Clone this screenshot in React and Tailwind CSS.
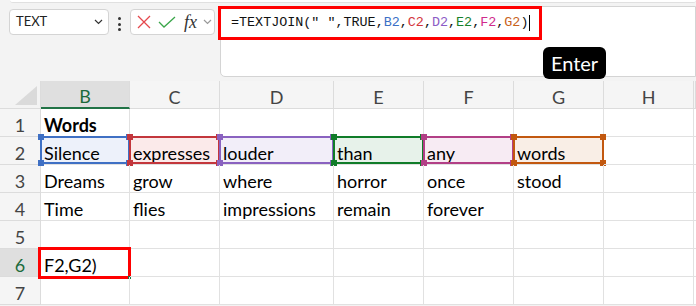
import React from 'react';

const cols = ['B', 'C', 'D', 'E', 'F', 'G', 'H', ''];

const rows = [
  ['Words', '', '', '', '', '', '', ''],
  ['Silence', 'expresses', 'louder', 'than', 'any', 'words', '', ''],
  ['Dreams', 'grow', 'where', 'horror', 'once', 'stood', '', ''],
  ['Time', 'flies', 'impressions', 'remain', 'forever', '', '', ''],
  ['', '', '', '', '', '', '', ''],
  ['F2,G2)', '', '', '', '', '', '', ''],
  ['', '', '', '', '', '', '', ''],
];

// colour of each reference range in row 2
const ranges = [
  { border: 'border-[#3f70c4]', handle: 'bg-[#3f70c4]', fill: 'bg-[#edf1fa]' },
  { border: 'border-[#c3363c]', handle: 'bg-[#c3363c]', fill: 'bg-[#fbeaea]' },
  { border: 'border-[#8a62c0]', handle: 'bg-[#8a62c0]', fill: 'bg-[#f2eef9]' },
  { border: 'border-[#107c29]', handle: 'bg-[#107c29]', fill: 'bg-[#e7f2ea]' },
  { border: 'border-[#b23f86]', handle: 'bg-[#b23f86]', fill: 'bg-[#f7ebf3]' },
  { border: 'border-[#c2580f]', handle: 'bg-[#c2580f]', fill: 'bg-[#f9eee6]' },
];

const gridCols = 'grid grid-cols-[41px_89px_90px_114px_90px_90px_90px_90px_2px]';

function Chevron({ className }) {
  return (
    <svg width="9" height="6" viewBox="0 0 9 6" className={className}>
      <path d="M1 1 L4.5 4.5 L8 1" fill="none" stroke="currentColor" strokeWidth="1.2" />
    </svg>
  );
}

function RangeBox({ r }) {
  return (
    <div className={`absolute -left-[1px] -top-[1px] -right-[1px] bottom-0 border-2 ${r.border}`}>
      <span className={`absolute -left-[4px] -top-[4px] w-[6px] h-[6px] ${r.handle}`} />
      <span className={`absolute -right-[4px] -top-[4px] w-[6px] h-[6px] ${r.handle}`} />
      <span className={`absolute -left-[4px] -bottom-[4px] w-[6px] h-[6px] ${r.handle}`} />
      <span className={`absolute -right-[4px] -bottom-[4px] w-[6px] h-[6px] ${r.handle}`} />
    </div>
  );
}

export default function App() {
  return (
    <div className="w-[696px] h-[306px] overflow-hidden bg-[#f3f3f3] font-['Lato',sans-serif] text-black">
      {/* formula bar area */}
      <div className="relative h-[81px]">
        <div className="ml-[10px] h-[3px] bg-white rounded-b-[5px] border-b border-[#e0e0e0]" />
        <div className="flex items-start">
          <div className="ml-[9px] mt-[6px] w-[100px] h-[26px] bg-white border border-[#d4d4d4] rounded-[4px] flex items-center justify-between pl-[6px] pr-[5px]">
            <span className="text-[13px] text-[#222]">TEXT</span>
            <Chevron className="text-[#333]" />
          </div>
          <div className="w-[21px] mt-[14px] flex flex-col items-center gap-[2.5px]">
            <span className="w-[3px] h-[3px] rounded-full bg-[#333]" />
            <span className="w-[3px] h-[3px] rounded-full bg-[#333]" />
            <span className="w-[3px] h-[3px] rounded-full bg-[#333]" />
          </div>
          <div className="mt-[6px] w-[85px] h-[26px] bg-white border border-[#d4d4d4] rounded-[4px] flex items-center pl-[6px]">
            <svg width="14" height="14" viewBox="0 0 14 14">
              <path d="M1 1 L13 13 M13 1 L1 13" stroke="#e5484d" strokeWidth="1.3" fill="none" />
            </svg>
            <svg width="18" height="12" viewBox="0 0 18 12" className="ml-[7px]">
              <path d="M1 6 L6 11 L17 1" stroke="#3aa64a" strokeWidth="1.3" fill="none" />
            </svg>
            <span className="ml-[8px] font-['Liberation_Serif',serif] italic text-[18px] leading-none text-[#333]">fx</span>
            <Chevron className="ml-[6px] text-[#999]" />
          </div>
          <div className="ml-[5px] mt-[3px] flex-1 h-[71px] bg-white border border-[#d4d4d4] rounded-l-[5px]" />
        </div>
        <div className="absolute left-[218px] top-[6px] w-[324px] h-[34px] border-[3px] border-[#ff0000] flex items-center pl-[10px] font-['Liberation_Mono',monospace] text-[13.4px] text-[#111]">
          <span>=TEXTJOIN(" ",TRUE,</span>
          <span className="text-[#3b6fc6]">B2</span>,
          <span className="text-[#d3343b]">C2</span>,
          <span className="text-[#8c5bc6]">D2</span>,
          <span className="text-[#16802a]">E2</span>,
          <span className="text-[#d02a8c]">F2</span>,
          <span className="text-[#c8621c]">G2</span>
          <span>)</span>
          <span className="ml-[1px] w-[1px] h-[16px] bg-black" />
        </div>
        <div className="absolute left-[543px] top-[47px] w-[63px] h-[32px] bg-black rounded-[6px] flex items-center justify-center text-white text-[20px]">
          Enter
        </div>
      </div>

      {/* column headers */}
      <div className={gridCols}>
        <div className="relative h-[28px] border-r border-b border-[#dcdcdc] bg-[#f3f3f3]">
          <svg width="22" height="19" viewBox="0 0 22 19" className="absolute right-[3px] bottom-[3px]">
            <path d="M22 0 L22 19 L0 19 Z" fill="#dadada" />
          </svg>
        </div>
        {cols.map((c) => (
          <div
            key={c || 'end'}
            className={`relative h-[28px] border-r border-[#dcdcdc] flex items-end justify-center text-[18px] leading-[22px] ${
              c === 'B' ? 'bg-[#dfdfdf] text-[#1d6b3c] border-b-2 border-b-[#217346]' : 'bg-[#f5f5f5] text-[#444] border-b'
            }`}
          >
            {c}
          </div>
        ))}
      </div>

      {/* rows */}
      {rows.map((row, ri) => (
        <div key={ri} className={`${gridCols} bg-white`}>
          <div
            className={`h-[28px] border-r border-b border-[#dcdcdc] flex items-end justify-center text-[18px] leading-[22px] ${
              ri === 5 ? 'bg-[#dfdfdf] text-[#1d6b3c]' : 'bg-[#f5f5f5] text-[#444]'
            }`}
          >
            {ri + 1}
          </div>
          {row.map((v, ci) => {
            const r = ri === 1 ? ranges[ci] : null;
            const selected = ri === 5 && ci === 0;
            return (
              <div
                key={ci}
                className={`relative h-[28px] border-r border-b border-[#e1e1e1] flex items-end pl-[3px] text-[18px] leading-[22px] whitespace-nowrap ${
                  r ? r.fill : ''
                } ${ri === 0 && ci === 0 ? 'font-bold' : ''}`}
              >
                {v}
                {r && <RangeBox r={r} />}
                {selected && (
                  <div className="absolute -left-[3px] -top-[2px] -right-[2px] -bottom-[3px] border-[3px] border-[#ff0000]">
                    <span className="absolute -right-[3px] -bottom-[3px] w-[3px] h-[3px] bg-[#217346]" />
                  </div>
                )}
              </div>
            );
          })}
        </div>
      ))}
    </div>
  );
}
